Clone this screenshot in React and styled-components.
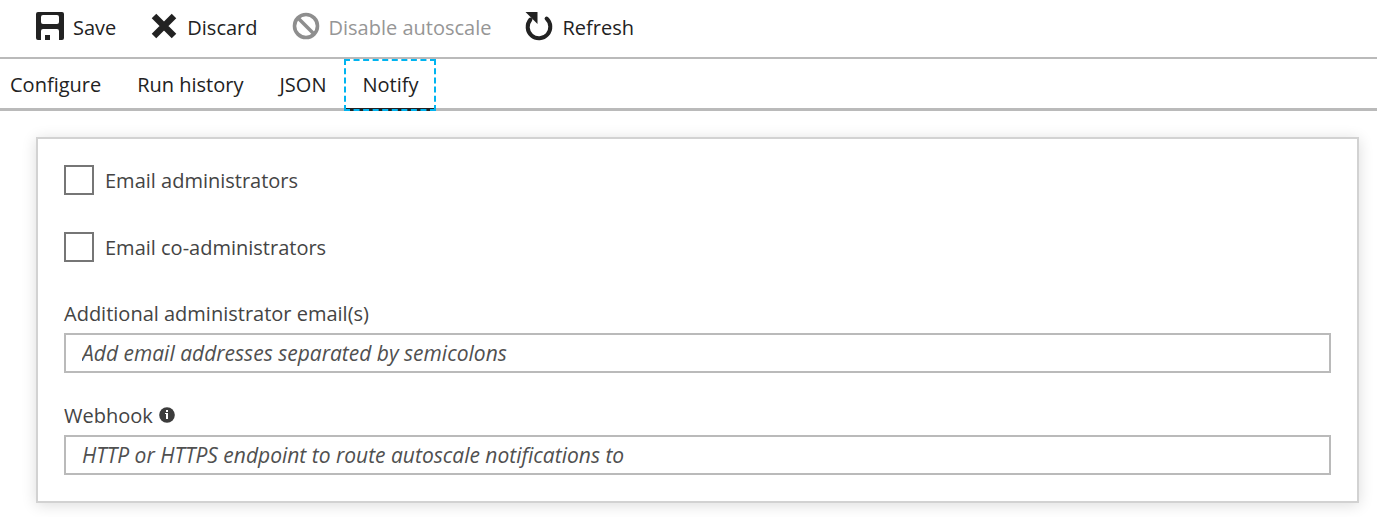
import React from "react";
import styled, { createGlobalStyle } from "styled-components";

const GlobalStyle = createGlobalStyle`
  *, *::before, *::after { box-sizing: border-box; }
  body {
    margin: 0;
    background: #fff;
    color: #222;
    font-family: "Segoe UI", "Open Sans", "Noto Sans", sans-serif;
    font-size: 20px;
    line-height: 28px;
  }
  button, input { font: inherit; color: inherit; }
`;

const Toolbar = styled.div`
  display: flex;
  gap: 33px;
  height: 59px;
  padding: 0 35px 2px;
  border-bottom: 2px solid #bababa;
`;

const Command = styled.button`
  display: flex;
  align-items: center;
  gap: 8px;
  padding: 0;
  border: 0;
  background: none;
  white-space: nowrap;

  &:disabled { color: #969696; }
`;

const CommandIcon = styled.svg`
  flex: none;
  width: 30px;
  height: 30px;
  margin-bottom: 4px;
`;

const Tabs = styled.div`
  display: flex;
  height: 52px;
  box-shadow: inset 0 -3px #bababa;
`;

const Tab = styled.button`
  position: relative;
  padding: 0 18px;
  border: 0;
  background: none;
  white-space: nowrap;
  outline: none;

  &:first-child { padding-left: 10px; }

  &[aria-selected="true"]::before {
    content: "";
    position: absolute;
    inset: auto 2px 0;
    height: 3px;
    background: #222;
  }

  &[aria-selected="true"]::after {
    content: "";
    position: absolute;
    inset: 0;
    border: 2px dashed #00b4f0;
  }
`;

const Panel = styled.form`
  display: flex;
  flex-direction: column;
  margin: 26px 18px 14px 36px;
  padding: 26px;
  border: 2px solid #d2d2d2;
  box-shadow: 0 2px 14px rgba(0, 0, 0, 0.14);
  color: #444;
`;

const CheckRow = styled.label`
  display: flex;
  align-items: flex-end;
  align-self: flex-start;
  gap: 11px;
  height: 30px;
  margin-bottom: 37px;
`;

const Checkbox = styled.input`
  appearance: none;
  width: 30px;
  height: 30px;
  margin: 0;
  border: 2px solid #767676;
  background: #fff;

  &:checked { background: #767676; box-shadow: inset 0 0 0 4px #fff; }
`;

const Field = styled.div`
  display: flex;
  flex-direction: column;
  gap: 5px;

  & + & { margin-top: 28px; }
`;

const LabelRow = styled.div`
  display: flex;
  align-items: flex-end;
  gap: 6px;
  height: 29px;
`;

const InfoIcon = styled.svg`
  width: 16px;
  height: 16px;
  margin-bottom: 7px;
`;

const TextInput = styled.input`
  width: 100%;
  height: 40px;
  padding: 0 16px;
  border: 2px solid #bababa;
  border-radius: 0;
  background: #fff;
  font-size: 21px;

  &::placeholder { color: #505050; opacity: 1; font-style: italic; }
`;

const SaveIcon = () => (
  <CommandIcon viewBox="0 0 30 30" aria-hidden="true">
    <path
      fill="#222"
      fillRule="evenodd"
      d="M3 1H27Q29 1 29 3V27Q29 29 27 29H24V20Q24 18 22 18H8Q6 18 6 20V29H3Q1 29 1 27V3Q1 1 3 1ZM8 4Q6 4 6 6V11Q6 13 8 13H22Q24 13 24 11V6Q24 4 22 4ZM10 24H15V29H10Z"
    />
  </CommandIcon>
);

const DiscardIcon = () => (
  <CommandIcon viewBox="0 0 30 30" aria-hidden="true">
    <path d="M5 5L25 25M25 5L5 25" stroke="#222" strokeWidth="6.4" />
  </CommandIcon>
);

const DisableIcon = () => (
  <CommandIcon viewBox="0 0 30 30" aria-hidden="true">
    <circle cx="15" cy="15" r="11.5" fill="none" stroke="#8e8e8e" strokeWidth="3.6" />
    <path d="M7 7L23 23" stroke="#8e8e8e" strokeWidth="3.6" />
  </CommandIcon>
);

const RefreshIcon = () => (
  <CommandIcon viewBox="0 0 30 30" aria-hidden="true">
    <path
      d="M6.4 8.6A11.3 11.3 0 1 0 22.6 7.6"
      fill="none"
      stroke="#222"
      strokeWidth="4"
      strokeLinecap="round"
    />
    <path fill="#222" d="M1.5 1H13.5V13Z" />
  </CommandIcon>
);

const tabs = ["Configure", "Run history", "JSON", "Notify"];

export default function App() {
  const [active, setActive] = React.useState("Notify");

  return (
    <>
      <GlobalStyle />
      <Toolbar role="toolbar">
        <Command type="button"><SaveIcon />Save</Command>
        <Command type="button"><DiscardIcon />Discard</Command>
        <Command type="button" disabled><DisableIcon />Disable autoscale</Command>
        <Command type="button"><RefreshIcon />Refresh</Command>
      </Toolbar>
      <Tabs role="tablist">
        {tabs.map((name) => (
          <Tab
            key={name}
            type="button"
            role="tab"
            aria-selected={name === active}
            onClick={() => setActive(name)}
          >
            {name}
          </Tab>
        ))}
      </Tabs>
      <Panel>
        <CheckRow>
          <Checkbox type="checkbox" />
          Email administrators
        </CheckRow>
        <CheckRow>
          <Checkbox type="checkbox" />
          Email co-administrators
        </CheckRow>
        <Field>
          <LabelRow>
            <label htmlFor="emails">Additional administrator email(s)</label>
          </LabelRow>
          <TextInput id="emails" placeholder="Add email addresses separated by semicolons" />
        </Field>
        <Field>
          <LabelRow>
            <label htmlFor="webhook">Webhook</label>
            <InfoIcon viewBox="0 0 16 16" aria-hidden="true">
              <circle cx="8" cy="8" r="7.8" fill="#3c3c3c" />
              <path fill="#fff" d="M7 3H9V5H7ZM6 6H9V12H7V7H6Z" />
            </InfoIcon>
          </LabelRow>
          <TextInput id="webhook" placeholder="HTTP or HTTPS endpoint to route autoscale notifications to" />
        </Field>
      </Panel>
    </>
  );
}
